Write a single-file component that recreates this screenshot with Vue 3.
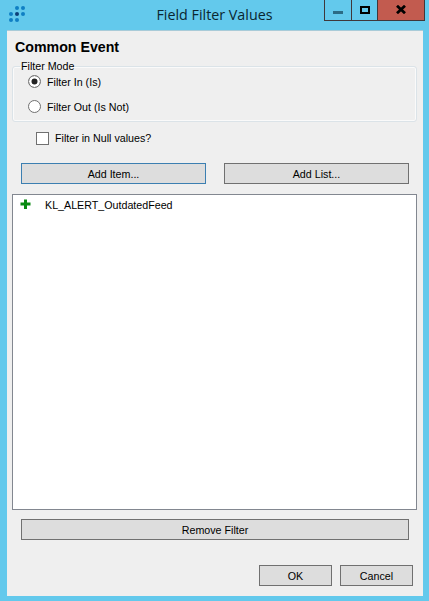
<script setup>
const modes = [
  { label: 'Filter In (Is)', on: true },
  { label: 'Filter Out (Is Not)', on: false },
]
</script>

<template>
  <div class="window">
    <header class="titlebar">
      <svg class="logo" width="30" height="30" viewBox="0 0 30 30">
        <g fill="#0f7fc4">
          <circle cx="17" cy="8" r="2" /><circle cx="23" cy="8" r="2" />
          <circle cx="11" cy="14" r="2" /><circle cx="23" cy="14" r="2" />
          <circle cx="11" cy="20" r="2" /><circle cx="17" cy="20" r="2" />
        </g>
        <circle cx="17" cy="14" r="2" fill="#0d3f78" />
      </svg>
      <div class="title">Field Filter Values</div>
      <div class="controls">
        <div class="ctl min"><span class="min-bar"></span></div>
        <div class="ctl max"><span class="max-box"></span></div>
        <div class="ctl close">
          <svg width="10" height="9" viewBox="0 0 10 9"><path d="M1 0.8 L9 8.2 M9 0.8 L1 8.2" stroke="#000" stroke-width="2.8" fill="none" /></svg>
        </div>
      </div>
    </header>

    <main class="client">
      <h1 class="heading">Common Event</h1>
      <fieldset class="group">
        <legend>Filter Mode</legend>
        <label v-for="m in modes" :key="m.label" class="radio-row">
          <span class="radio" :class="{ on: m.on }"></span>
          <span>{{ m.label }}</span>
        </label>
      </fieldset>

      <label class="check-row">
        <span class="check"></span>
        <span>Filter in Null values?</span>
      </label>

      <div class="add-row">
        <button class="btn focus">Add Item...</button>
        <button class="btn">Add List...</button>
      </div>

      <div class="list">
        <div class="item">
          <svg width="11" height="11" viewBox="0 0 11 11"><path d="M5.5 0.5 V10 M0.5 5 H10.5" stroke="#0a8a12" stroke-width="3" fill="none" /></svg>
          <span>KL_ALERT_OutdatedFeed</span>
        </div>
      </div>

      <button class="btn remove">Remove Filter</button>

      <div class="footer">
        <button class="btn small">OK</button>
        <button class="btn small">Cancel</button>
      </div>
    </main>
  </div>
</template>

<style>
html, body { margin: 0; background: #63c9ec; }
</style>

<style scoped>
.window {
  width: 429px;
  height: 601px;
  background: #63c9ec;
  display: flex;
  flex-direction: column;
  font-family: "Liberation Sans", Arial, sans-serif;
  font-size: 10.7px;
  color: #000;
  overflow: hidden;
}
.titlebar {
  height: 30px;
  flex: none;
  display: grid;
  grid-template-columns: 1fr auto 1fr;
  align-items: start;
  box-sizing: border-box;
}
.logo { display: block; }
.title {
  font-family: "Open Sans", sans-serif;
  font-size: 14.3px;
  line-height: 30px;
  color: #0a2630;
}
.controls {
  justify-self: end;
  display: flex;
  height: 21px;
  margin-right: 4px;
  box-sizing: border-box;
  border: 1px solid #40383a;
  border-top: none;
}
.ctl {
  display: flex;
  align-items: center;
  justify-content: center;
  box-sizing: border-box;
  height: 20px;
}
.min { width: 27px; border-right: 1px solid #40383a; }
.max { width: 26px; border-right: 1px solid #40383a; }
.close { width: 46px; background: #c25b4f; }
.min-bar { width: 10px; height: 3px; background: #2b6b85; margin-top: 4px; }
.max-box { width: 10px; height: 8px; box-sizing: border-box; border: 2px solid #000; margin-top: -1px; }
.close svg { margin-top: -1px; }

.client {
  flex: none;
  width: 416px;
  height: 566px;
  margin-left: 7px;
  background: #efefef;
  border-top: 1px solid #a9cbd8;
  box-sizing: border-box;
  display: flex;
  flex-direction: column;
}
.heading {
  margin: 8px 0 0 8px;
  font-size: 14.2px;
  line-height: 16px;
  font-weight: 700;
}
.group {
  margin: 5px 0 0 5px;
  padding: 0;
  width: 405px;
  height: 62px;
  box-sizing: border-box;
  border: 1px solid #dbe3e8;
  border-radius: 3px;
  box-shadow: inset 0 0 0 1px #fafafa;
}
.group legend {
  margin-left: 7px;
  padding: 0 1px;
  font-size: 10.7px;
  line-height: 13px;
}
.radio-row {
  display: flex;
  align-items: center;
  gap: 6px;
  height: 25px;
  padding-left: 15px;
}
.radio-row:first-of-type { margin-top: -4px; }
.radio {
  width: 11px;
  height: 11px;
  border: 1px solid #707070;
  border-radius: 50%;
  background: #fff;
}
.radio.on { box-shadow: inset 0 0 0 2.5px #fff, inset 0 0 0 6px #222; }
.check-row {
  display: flex;
  align-items: center;
  gap: 6px;
  height: 14px;
  margin: 9px 0 0 29px;
}
.check {
  width: 11px;
  height: 11px;
  border: 1px solid #707070;
  background: #fff;
}
.btn {
  display: block;
  box-sizing: border-box;
  height: 21px;
  padding: 0;
  background: #dddddd;
  border: 1px solid #707070;
  border-radius: 0;
  font-family: inherit;
  font-size: 10.7px;
  color: #000;
}
.btn.focus { border-color: #3c7fb1; }
.add-row {
  display: flex;
  gap: 18px;
  margin: 18px 0 0 14px;
}
.add-row .btn { width: 185px; }
.list {
  box-sizing: border-box;
  width: 405px;
  height: 316px;
  margin: 10px 0 0 5px;
  background: #fff;
  border: 1px solid #828790;
}
.item {
  display: flex;
  align-items: center;
  height: 18px;
  margin-top: 1px;
  padding-left: 7px;
}
.item svg { margin-top: -1px; flex: none; }
.item span { margin-left: 14px; }
.remove {
  width: 388px;
  margin: 9px 0 0 14px;
}
.footer {
  display: flex;
  justify-content: flex-end;
  gap: 8px;
  margin: 25px 10px 0 0;
}
.small { width: 73px; }
</style>
